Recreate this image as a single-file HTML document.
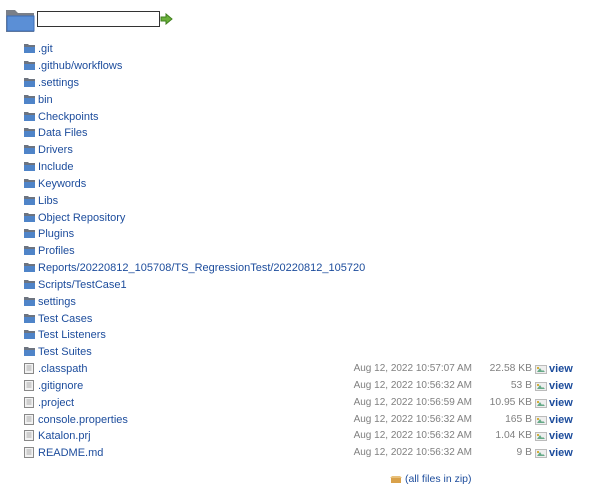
<!DOCTYPE html>
<html><head><meta charset="utf-8"><style>
body{margin:0;width:609px;height:500px;background:#fff;font-family:"Liberation Sans",Arial,sans-serif;font-size:11px;position:relative;overflow:hidden}
.r{position:absolute;left:24px;height:16px;line-height:16px;white-space:nowrap}
.r a{color:#1c4c9c;text-decoration:none;position:absolute;left:14px}
.fi{position:absolute;left:0;top:3px;width:11px;height:9px}
.d{position:absolute;right:137px;color:#808080;line-height:16px;height:16px;font-size:10px}
.s{position:absolute;right:77px;color:#808080;line-height:16px;height:16px;font-size:10.3px}
.v{position:absolute;left:535px;height:16px;line-height:16px}
.v a{color:#1c4c9c;text-decoration:none;font-weight:bold;position:absolute;left:14px}
</style></head><body>
<svg style="position:absolute;left:5px;top:7px" width="32" height="26"><path d="M1 3h9l3 3h16v19H1z" fill="#7a7f88"/><path d="M2 9h27v15H2z" fill="#5b8fd6" stroke="#3d6eb5"/></svg>
<div style="position:absolute;left:37px;top:11px;width:121px;height:14px;border:1px solid #333;background:#fff"></div>
<svg style="position:absolute;left:160px;top:13px" width="13" height="12"><path d="M1 4h5V1l6 5-6 5V8H1z" fill="#6ab03a" stroke="#3f7f1d"/></svg>
<div id="list"></div>
<script>
var dirs=[".git",".github/workflows",".settings","bin","Checkpoints","Data Files","Drivers","Include","Keywords","Libs","Object Repository","Plugins","Profiles","Reports/20220812_105708/TS_RegressionTest/20220812_105720","Scripts/TestCase1","settings","Test Cases","Test Listeners","Test Suites"];
var files=[[".classpath","Aug 12, 2022 10:57:07 AM","22.58 KB"],[".gitignore","Aug 12, 2022 10:56:32 AM","53 B"],[".project","Aug 12, 2022 10:56:59 AM","10.95 KB"],["console.properties","Aug 12, 2022 10:56:32 AM","165 B"],["Katalon.prj","Aug 12, 2022 10:56:32 AM","1.04 KB"],["README.md","Aug 12, 2022 10:56:32 AM","9 B"]];
var h="",y=41.3;
var fold='<svg class="fi" viewBox="0 0 11 9"><path d="M0 0h4l1 1h6v8H0z" fill="#6d7480"/><path d="M0 3h11v6H0z" fill="#4f84c8"/></svg>';
var doc='<svg class="fi" style="top:2px;height:11px;width:10px" viewBox="0 0 10 11"><rect x=".5" y=".5" width="9" height="10" fill="#f2f2f2" stroke="#888"/><path d="M2.5 3h5M2.5 5h5M2.5 7h5" stroke="#aaa"/></svg>';
var vi='<svg style="position:absolute;left:0;top:4px" width="12" height="9"><rect x=".5" y=".5" width="11" height="8" fill="#eee" stroke="#bbb"/><path d="M2 7l3-4 2 3 1-1 2 2z" fill="#6a8"/><circle cx="3" cy="3" r="1" fill="#c90"/></svg>';
dirs.forEach(function(n,i){h+='<div class="r" style="top:'+(y+i*16.83).toFixed(1)+'px">'+fold+'<a>'+n+'</a></div>';});
files.forEach(function(f,i){var t=(y+(i+19)*16.83).toFixed(1);h+='<div class="r" style="top:'+t+'px">'+doc+'<a>'+f[0]+'</a></div><div class="d" style="top:'+t+'px">'+f[1]+'</div><div class="s" style="top:'+t+'px">'+f[2]+'</div><div class="v" style="top:'+t+'px">'+vi+'<a>view</a></div>';});
h+='<div style="position:absolute;left:390px;top:471px;height:16px;line-height:16px"><svg style="position:absolute;left:0;top:4px" width="12" height="9"><path d="M1 3h10v5H1z" fill="#d9a14a"/><path d="M0 3l2-2h8l2 2z" fill="#e8c07a"/></svg><a style="position:absolute;left:15px;color:#1c4c9c;white-space:nowrap;font-size:10.5px">(all files in zip)</a></div>';
document.getElementById("list").innerHTML=h;
</script>
</body></html>
